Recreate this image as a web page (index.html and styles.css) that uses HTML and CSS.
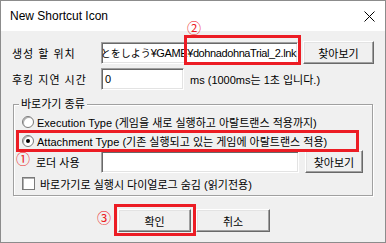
FILE: index.html
```html
<!DOCTYPE html>
<html lang="ko">
<head>
<meta charset="utf-8">
<title>New Shortcut Icon</title>
<link rel="stylesheet" href="styles.css">
</head>
<body>
<div class="win">
  <div class="titlebar">
    <span class="title">New Shortcut Icon</span>
    <svg class="close" width="11" height="11" viewBox="0 0 11 11"><path d="M0.5 0.5L10.5 10.5M10.5 0.5L0.5 10.5" stroke="#000" stroke-width="1" fill="none"/></svg>
  </div>
  <div class="content">
    <div class="row">
      <span class="lbl">생성 할 위치</span>
      <div class="edit path"><span class="jp">とをしよう</span><span class="lat">¥GAME¥dohnadohnaTrial_2.lnk</span></div>
      <div class="btn btn-top">찾아보기</div>
    </div>
    <div class="row row2">
      <span class="lbl">후킹 지연 시간</span>
      <div class="edit delay">0</div>
      <span class="hint">ms (1000ms는 1초 입니다.)</span>
    </div>
    <div class="group">
      <span class="legend">바로가기 종류</span>
      <div class="opt"><span class="radio"></span>Execution Type (게임을 새로 실행하고 아랄트랜스 적용까지)</div>
      <div class="opt"><span class="radio on"></span>Attachment Type (기존 실행되고 있는 게임에 아랄트랜스 적용)</div>
      <div class="row loader">
        <span class="lbl2">로더 사용</span>
        <div class="edit loaderpath"></div>
        <div class="btn btn-loader">찾아보기</div>
      </div>
      <div class="opt chk"><span class="check"></span>바로가기로 실행시 다이얼로그 숨김 (읽기전용)</div>
    </div>
    <div class="actions">
      <div class="btn btn-ok">확인</div>
      <div class="btn btn-cancel">취소</div>
    </div>
  </div>
  <div class="redbox rb1"></div>
  <div class="redbox rb2"></div>
  <div class="redbox rb3"></div>
  <span class="num n2">②</span>
  <span class="num n1">①</span>
  <span class="num n3">③</span>
</div>
</body>
</html>
```
FILE: styles.css
```css
* { box-sizing: border-box; }
html, body { margin: 0; padding: 0; }
body {
  width: 386px;
  height: 243px;
  overflow: hidden;
  font: 11px "Liberation Sans", "Noto Sans CJK KR", sans-serif;
  color: #000;
  background: #f0f0f0;
}
.win {
  position: relative;
  width: 386px;
  height: 243px;
  border: 1px solid #8c8c8c;
  background: #f0f0f0;
  display: flex;
  flex-direction: column;
}
.titlebar {
  flex: none;
  height: 30px;
  background: #fff;
  display: flex;
  align-items: center;
  justify-content: space-between;
  padding: 0 10px 0 9px;
}
.title { font-size: 12px; }
.content {
  display: flex;
  flex-direction: column;
  padding: 10px 0 0 11px;
}
.row { display: flex; align-items: center; }
.row2 { margin-top: 4px; }
.lbl { width: 89px; letter-spacing: 1px; white-space: nowrap; }
.edit {
  height: 22px;
  background: #fff;
  border: 1px solid;
  border-color: #a0a0a0 #fff #fff #a0a0a0;
  box-shadow: inset 1px 1px #696969, inset -1px -1px #e3e3e3;
  display: flex;
  align-items: center;
  padding: 0 3px;
  overflow: hidden;
  white-space: nowrap;
}
.path { width: 197px; justify-content: flex-end; padding: 0 1px; }
.jp { font-family: "Noto Sans CJK JP", sans-serif; font-size: 10px; }
.lat { letter-spacing: -0.4px; }
.delay { width: 83px; }
.hint { margin-left: 6px; white-space: nowrap; }
.btn {
  height: 23px;
  background: #f0f0f0;
  border: 1px solid;
  border-color: #fff #696969 #696969 #fff;
  box-shadow: inset -1px -1px #a0a0a0, inset 1px 1px #e3e3e3;
  display: flex;
  align-items: center;
  justify-content: center;
}
.btn-top { width: 71px; margin-left: 5px; }
.group {
  position: relative;
  margin: 14px 0 0 1px;
  width: 360px;
  height: 92px;
  border: 1px solid #a0a0a0;
  box-shadow: inset 1px 1px #fff, 1px 1px #fff;
  padding: 7px 0 0 8px;
}
.legend {
  position: absolute;
  top: -8px;
  left: 5px;
  padding: 0 2px;
  line-height: 14px;
  background: #f0f0f0;
}
.opt { display: flex; align-items: center; height: 19px; white-space: nowrap; }
.radio {
  position: relative;
  width: 12px;
  height: 12px;
  border-radius: 50%;
  background: #fff;
  border: 1px solid #7a7a7a;
  box-shadow: inset 1px 1px #b0b0b0;
  margin-right: 3px;
  flex: none;
}
.radio.on::after {
  content: "";
  position: absolute;
  left: 3px;
  top: 3px;
  width: 4px;
  height: 4px;
  border-radius: 50%;
  background: #000;
}
.loader { margin-left: 14px; height: 23px; }
.lbl2 { width: 65px; white-space: nowrap; }
.loaderpath { width: 198px; }
.btn-loader { width: 58px; margin-left: 6px; }
.chk { margin-top: 2px; height: 17px; }
.check {
  width: 13px;
  height: 13px;
  background: #fff;
  border: 1px solid #7a7a7a;
  box-shadow: inset 1px 1px #b0b0b0;
  margin-right: 5px;
  flex: none;
}
.actions {
  display: flex;
  gap: 5px;
  margin: 13px 0 0 106px;
}
.btn-ok { width: 73px; }
.btn-cancel { width: 74px; }
.redbox { position: absolute; border: 3px solid #ec1c24; }
.rb1 { left: 183px; top: 34px; width: 117px; height: 30px; }
.rb2 { left: 15px; top: 129px; width: 343px; height: 22px; }
.rb3 { left: 113px; top: 203px; width: 82px; height: 32px; }
.num {
  position: absolute;
  color: #ec1c24;
  font: 14px/14px "Noto Sans CJK KR", sans-serif;
}
.n2 { left: 186px; top: 19px; }
.n1 { left: 15px; top: 150px; }
.n3 { left: 96px; top: 209px; }
```
